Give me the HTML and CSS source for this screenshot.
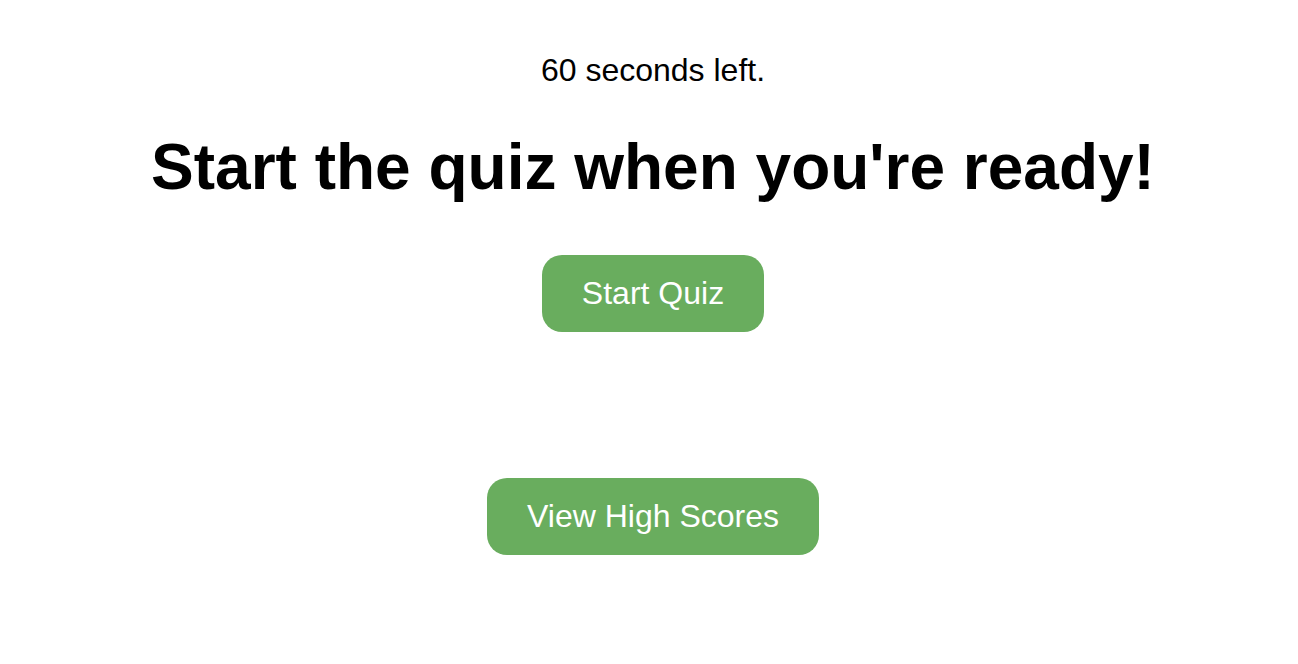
FILE: index.html
```html
<!DOCTYPE html>
<html lang="en">
<head>
<meta charset="utf-8">
<title>Quiz</title>
<link rel="stylesheet" href="styles.css">
</head>
<body>
<main class="page">
  <p class="timer">60 seconds left.</p>
  <h1 class="title">Start the quiz when you're ready!</h1>
  <button class="btn btn-start" type="button">Start Quiz</button>
  <button class="btn btn-scores" type="button">View High Scores</button>
</main>
</body>
</html>
```
FILE: styles.css
```css
html, body {
  margin: 0;
  padding: 0;
  background: #ffffff;
}
body {
  font-family: "Liberation Sans", Arial, Helvetica, sans-serif;
  color: #000000;
}
.page {
  display: flex;
  flex-direction: column;
  align-items: center;
  padding-top: 52px;
  padding-left: 8px;
}
.timer {
  margin: 0;
  font-size: 32px;
  line-height: 36px;
}
.title {
  margin: 42px 0 0;
  font-size: 64px;
  line-height: 74px;
  font-weight: bold;
}
.btn {
  font-family: "Liberation Sans", Arial, Helvetica, sans-serif;
  font-size: 32px;
  line-height: 37px;
  color: #ffffff;
  background: #69ad5e;
  border: none;
  border-radius: 20px;
  padding: 20px 40px;
  cursor: pointer;
}
.btn-start {
  margin-top: 51px;
}
.btn-scores {
  margin-top: 146px;
}
```
